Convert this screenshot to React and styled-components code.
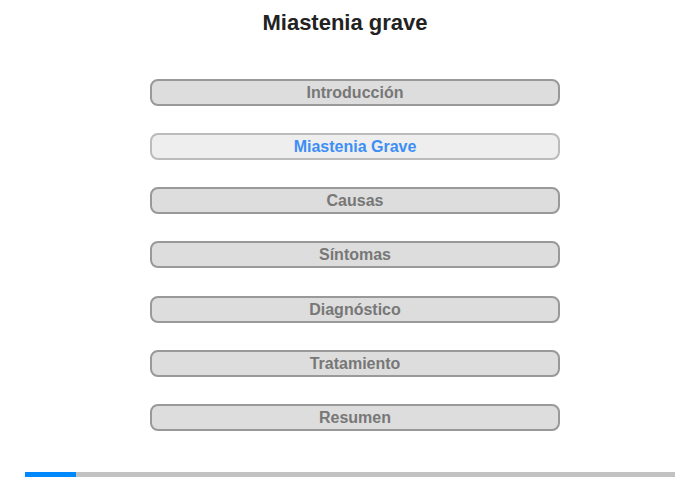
import React from "react";
import styled, { createGlobalStyle } from "styled-components";

const GlobalStyle = createGlobalStyle`
  html, body {
    margin: 0;
    padding: 0;
    background: #ffffff;
    font-family: "Liberation Sans", Arial, sans-serif;
  }
`;

const Page = styled.div`
  width: 700px;
  height: 480px;
  display: flex;
  flex-direction: column;
  box-sizing: border-box;
`;

const Title = styled.h1`
  margin: 0;
  padding: 10px 10px 0 0;
  height: 39px;
  text-align: center;
  font-size: 22px;
  font-weight: bold;
  color: #222222;
`;

const Menu = styled.nav`
  display: flex;
  flex-direction: column;
  gap: 27.17px;
  padding: 30px 0 0 150px;
`;

const MenuButton = styled.div`
  width: 410px;
  height: 27px;
  box-sizing: border-box;
  padding-top: 1px;
  border: 2px solid ${(p) => (p.$active ? "#bbbbbb" : "#999999")};
  border-radius: 8px;
  background: ${(p) => (p.$active ? "#eeeeee" : "#dddddd")};
  color: ${(p) => (p.$active ? "#3d8ef5" : "#777777")};
  font-size: 16px;
  font-weight: bold;
  display: flex;
  align-items: center;
  justify-content: center;
`;

const Progress = styled.div`
  margin: auto 0 3px 25px;
  width: 650px;
  height: 5px;
  background: #c2c2c2;
  display: flex;
`;

const ProgressFill = styled.div`
  height: 100%;
  background: #0088ff;
`;

const items = [
  "Introducción",
  "Miastenia Grave",
  "Causas",
  "Síntomas",
  "Diagnóstico",
  "Tratamiento",
  "Resumen",
];

export default function App() {
  const active = 1;
  return (
    <>
      <GlobalStyle />
      <Page>
        <Title>Miastenia grave</Title>
        <Menu>
          {items.map((label, i) => (
            <MenuButton key={label} $active={i === active}>
              {label}
            </MenuButton>
          ))}
        </Menu>
        <Progress>
          <ProgressFill style={{ width: `${(51 / 650) * 100}%` }} />
        </Progress>
      </Page>
    </>
  );
}
